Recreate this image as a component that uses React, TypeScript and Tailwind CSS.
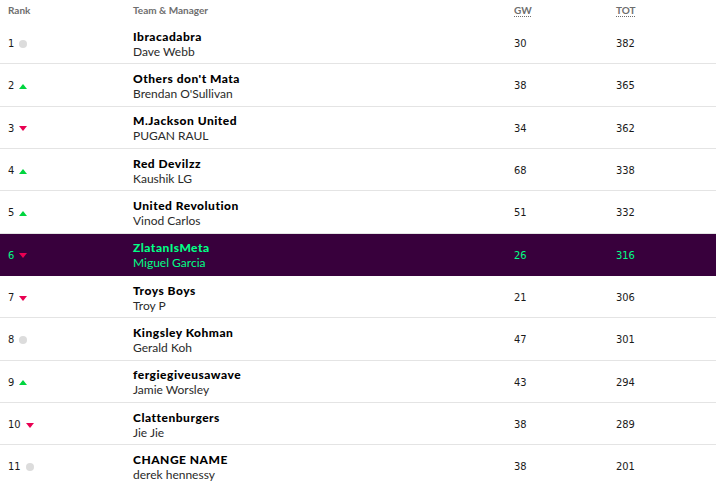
import React from "react";

type Move = "same" | "up" | "down";

type Entry = {
  rank: number;
  move: Move;
  team: string;
  manager: string;
  gw: number;
  total: number;
  mine?: boolean;
};

const ENTRIES: Entry[] = [
  { rank: 1, move: "same", team: "Ibracadabra", manager: "Dave Webb", gw: 30, total: 382 },
  { rank: 2, move: "up", team: "Others don't Mata", manager: "Brendan O'Sullivan", gw: 38, total: 365 },
  { rank: 3, move: "down", team: "M.Jackson United", manager: "PUGAN RAUL", gw: 34, total: 362 },
  { rank: 4, move: "up", team: "Red Devilzz", manager: "Kaushik LG", gw: 68, total: 338 },
  { rank: 5, move: "up", team: "United Revolution", manager: "Vinod Carlos", gw: 51, total: 332 },
  { rank: 6, move: "down", team: "ZlatanIsMeta", manager: "Miguel Garcia", gw: 26, total: 316, mine: true },
  { rank: 7, move: "down", team: "Troys Boys", manager: "Troy P", gw: 21, total: 306 },
  { rank: 8, move: "same", team: "Kingsley Kohman", manager: "Gerald Koh", gw: 47, total: 301 },
  { rank: 9, move: "up", team: "fergiegiveusawave", manager: "Jamie Worsley", gw: 43, total: 294 },
  { rank: 10, move: "down", team: "Clattenburgers", manager: "Jie Jie", gw: 38, total: 289 },
  { rank: 11, move: "same", team: "CHANGE NAME", manager: "derek hennessy", gw: 38, total: 201 },
];

function MoveIcon({ move }: { move: Move }) {
  if (move === "same") {
    return <span className="inline-block w-2 h-2 rounded-full bg-[#dcdcdc]" />;
  }
  if (move === "up") {
    return (
      <svg width="8" height="5" viewBox="0 0 8 5" className="block">
        <path d="M4 0L8 5H0Z" fill="#00d53f" />
      </svg>
    );
  }
  return (
    <svg width="8" height="5" viewBox="0 0 8 5" className="block">
      <path d="M0 0H8L4 5Z" fill="#e90052" />
    </svg>
  );
}

const numFont = "pt-[3px] font-['DejaVu_Sans_Condensed','DejaVu_Sans',sans-serif] text-[11px]";

export default function App() {
  return (
    <div className="w-[716px] bg-white font-['Lato',sans-serif]">
      {/* Header */}
      <div className="grid grid-cols-[133px_381px_102px_1fr] h-[22px] items-center text-[10px] font-bold text-[#6e6e6e] pb-px">
        <div className="pl-2">Rank</div>
        <div>Team &amp; Manager</div>
        <div>
          <span className="underline decoration-dotted underline-offset-2">GW</span>
        </div>
        <div>
          <span className="underline decoration-dotted underline-offset-2">TOT</span>
        </div>
      </div>

      {/* Rows */}
      {ENTRIES.map((e) => (
        <div
          key={e.rank}
          className={`grid grid-cols-[133px_381px_102px_1fr] h-[42.33px] items-center border-b ${
            e.mine
              ? "bg-[#38003c] border-[#38003c] text-[#00ff85]"
              : "border-[#e4e4e4] text-[#1a1a1a]"
          }`}
        >
          <div className={`pl-2 flex items-center gap-[5px] ${numFont}`}>
            <span>{e.rank}</span>
            <MoveIcon move={e.move} />
          </div>
          <div className="flex flex-col leading-[15px] pt-[2px]">
            <span className={`text-[12px] font-black tracking-[0.5px] ${e.mine ? "" : "text-black"}`}>
              {e.team}
            </span>
            <span className={`text-[12px] ${e.mine ? "" : "text-[#2a2a2a]"}`}>{e.manager}</span>
          </div>
          <div className={numFont}>{e.gw}</div>
          <div className={numFont}>{e.total}</div>
        </div>
      ))}
    </div>
  );
}
